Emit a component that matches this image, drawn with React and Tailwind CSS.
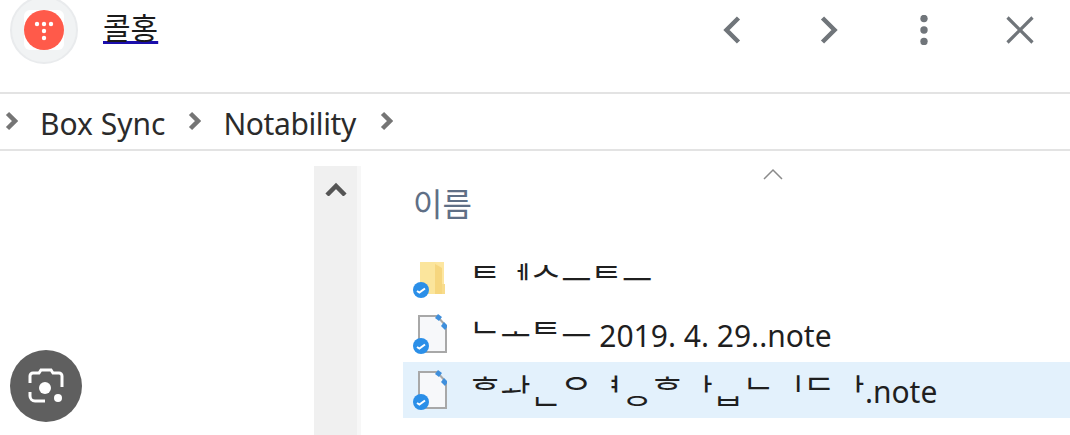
const ZWNJ = "\u200c";

// jamo stay decomposed in the reference, so they are kept apart with a joiner break
function Jamo({ text }) {
  return <span className="text-[33px]">{Array.from(text).join(ZWNJ)}</span>;
}

function SyncBadge() {
  return (
    <svg viewBox="0 0 16 16" className="absolute -left-[2px] bottom-0 w-4 h-4">
      <circle cx="8" cy="8" r="8" fill="#2b8fe8" />
      <path d="M4 9l2.4 1.6L12 6.5" fill="none" stroke="#fff" strokeWidth="2" />
    </svg>
  );
}

function FolderIcon() {
  return (
    <div className="relative w-[32px] h-[40px] -mt-[1px]">
      <svg viewBox="0 0 32 40" className="w-full h-full">
        <path d="M5 4h24v23h1v9H5z" fill="#fde6a0" />
        <path d="M5 4h15l6 5v27H12l-7-6z" fill="#fbe59c" />
        <path d="M20 6l7 4v26h-7z" fill="#f6d67e" />
        <path d="M27 26h3v10h-3z" fill="#f8dc8c" />
      </svg>
      <SyncBadge />
    </div>
  );
}

function NoteIcon() {
  return (
    <div className="relative w-[32px] h-[40px]">
      <svg viewBox="0 0 32 40" className="w-full h-full">
        <path d="M4 2h18l9 10v26H4z" fill="#f7f8fa" stroke="#a8a8a8" strokeWidth="2" />
        <path d="M23 0l4 3-3 4-4-3zM29 8l4 4-3 4-4-4z" fill="#3f8fdc" />
      </svg>
      <SyncBadge />
    </div>
  );
}

function FileRow({ selected, icon, jamo, tail }) {
  return (
    <div
      className={`flex items-center h-[56px] pl-[12px] ${selected ? "bg-[#e3f1fc]" : ""}`}
    >
      {icon}
      <div className="ml-[23px] text-[30px] text-[#1f1f1f] leading-none whitespace-pre font-['Noto_Sans','Noto_Sans_CJK_KR',sans-serif]">
        <Jamo text={jamo} />
        {tail}
      </div>
    </div>
  );
}

function CrumbArrow({ className }) {
  return (
    <svg viewBox="0 0 13 20" className={`w-[13px] h-[20px] ${className}`} fill="none" stroke="#757575" strokeWidth="4.5">
      <path d="M2.5 2.5l7.5 7.5-7.5 7.5" />
    </svg>
  );
}

export default function App() {
  return (
    <div className="w-[1070px] h-[435px] overflow-hidden relative bg-white font-['Noto_Sans','Noto_Sans_CJK_KR',sans-serif]">
      {/* TOP BAR */}
      <div className="h-[94px] border-b-2 border-[#e3e3e3] flex items-start">
        <div className="ml-[10px] -mt-[4px] w-[68px] h-[68px] rounded-full bg-[#f1f3f4] border-[2px] border-[#e9ebed] flex items-center justify-center">
          <div className="w-[40px] h-[40px] rounded-[6px] bg-white">
            <svg viewBox="0 0 40 40" className="w-full h-full">
              <circle cx="20" cy="20" r="20" fill="#ff5a4a" />
              <g fill="#fff">
                <circle cx="13" cy="14" r="2.2" />
                <circle cx="20" cy="14" r="2.2" />
                <circle cx="27" cy="14" r="2.2" />
                <circle cx="20" cy="21" r="2.2" />
                <circle cx="20" cy="28" r="2.2" />
              </g>
            </svg>
          </div>
        </div>
        <a className="ml-[25px] mt-[6px] text-[30px] leading-[40px] text-[#1a1a1a] underline decoration-[#1a0dab] font-['Noto_Sans_CJK_KR',sans-serif]">
          콜홍
        </a>
        <div className="ml-auto flex items-center h-[60px] text-[#70757a]">
          <svg viewBox="0 0 18 28" className="w-[18px] h-[28px] mr-[79px]" fill="none" stroke="currentColor" strokeWidth="4.5">
            <path d="M15.5 2L3.5 14l12 12" />
          </svg>
          <svg viewBox="0 0 18 28" className="w-[18px] h-[28px] mr-[82px]" fill="none" stroke="currentColor" strokeWidth="4.5">
            <path d="M2.5 2l12 12-12 12" />
          </svg>
          <svg viewBox="0 0 8 30" className="w-[8px] h-[30px] mr-[78px]" fill="currentColor">
            <circle cx="4" cy="3.5" r="3.7" />
            <circle cx="4" cy="15" r="3.7" />
            <circle cx="4" cy="26.5" r="3.7" />
          </svg>
          <svg viewBox="0 0 28 28" className="w-[28px] h-[28px] mr-[36px]" fill="none" stroke="currentColor" strokeWidth="3.2">
            <path d="M1.5 1.5l25 25M26.5 1.5l-25 25" />
          </svg>
        </div>
      </div>

      {/* BREADCRUMB */}
      <div className="h-[57px] border-b-2 border-[#e3e3e3] flex items-center text-[30px] text-[#2b2b2b] pl-[5px]">
        <CrumbArrow className="mt-[-2px]" />
        <span className="ml-[22px] mt-[4px]">Box Sync</span>
        <CrumbArrow className="ml-[23px] mt-[-2px]" />
        <span className="ml-[22px] mt-[4px] tracking-[-0.4px]">Notability</span>
        <CrumbArrow className="ml-[24px] mt-[-2px]" />
      </div>

      {/* BODY */}
      <div className="flex pt-[15px] pl-[314px] h-[284px]">
        <div className="w-[43px] bg-[#f0f0f0] flex justify-center pt-[16px] shrink-0">
          <svg viewBox="0 0 22 14" className="w-[22px] h-[14px]" fill="none" stroke="#555" strokeWidth="4.5">
            <path d="M2 13l9-9 9 9" />
          </svg>
        </div>
        <div className="w-[4px] bg-[#f7f7f7] shrink-0" />
        <div className="ml-[42px] flex-1 flex flex-col">
          <div className="h-[84px] relative">
            <svg viewBox="0 0 20 12" className="absolute left-[360px] top-[2px] w-[20px] h-[12px]" fill="none" stroke="#8a8a8a" strokeWidth="1.5">
              <path d="M1 11l9-9 9 9" />
            </svg>
            <div className="pl-[10px] pt-[15px] text-[32px] leading-[42px] text-[#5f6f86] font-['Noto_Sans_CJK_KR',sans-serif]">
              이름
            </div>
          </div>
          <FileRow icon={<FolderIcon />} jamo={"\u1110\u1166\u1109\u1173\u1110\u1173"} />
          <FileRow icon={<NoteIcon />} jamo={"\u1102\u1169\u1110\u1173"} tail=" 2019. 4. 29..note" />
          <FileRow
            selected
            icon={<NoteIcon />}
            jamo={"\u1112\u116a\u11ab\u110b\u1167\u11bc\u1112\u1161\u11b8\u1102\u1175\u1103\u1161"}
            tail=".note"
          />
        </div>
      </div>

      {/* lens button floats over the page */}
      <div className="absolute left-[10px] top-[350px] w-[72px] h-[72px] rounded-full bg-[#5f5f5f] flex items-center justify-center">
        <svg viewBox="0 0 36 36" className="w-[36px] h-[36px]" fill="none" stroke="#fff" strokeWidth="3">
          <path d="M2 15V8a3 3 0 0 1 3-3h6l2-3h10l2 3h6a3 3 0 0 1 3 3v11" />
          <path d="M2 24v4a5 5 0 0 0 5 5h10" />
          <circle cx="17" cy="20" r="6" fill="#fff" stroke="none" />
          <circle cx="30" cy="30" r="4" fill="#fff" stroke="none" />
        </svg>
      </div>
    </div>
  );
}
